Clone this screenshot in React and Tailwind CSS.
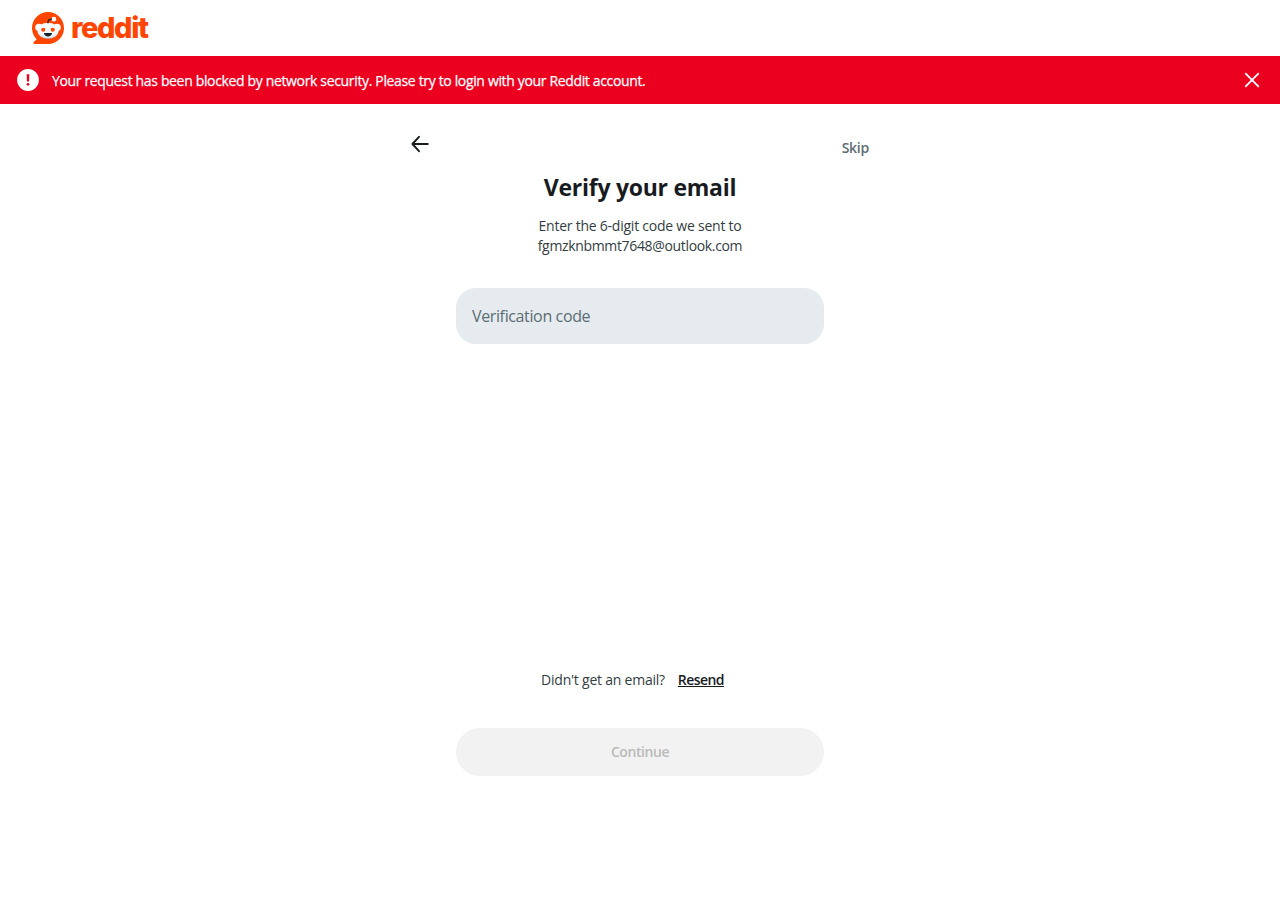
function RedditMark() {
  return (
    <svg viewBox="0 0 216 216" className="size-8 shrink-0" aria-hidden="true">
      <defs>
        <radialGradient id="head" cx="50%" cy="30%" r="75%">
          <stop offset="0" stopColor="#ffffff" />
          <stop offset="0.65" stopColor="#f4fafc" />
          <stop offset="0.85" stopColor="#d5e3ea" />
          <stop offset="1" stopColor="#8fa5af" />
        </radialGradient>
      </defs>
      <path
        fill="#ff4500"
        d="M108 0C48.35 0 0 48.35 0 108c0 29.82 12.09 56.82 31.63 76.37l-20.57 20.57c-4.08 4.08-1.19 11.06 4.58 11.06H108c59.65 0 108-48.35 108-108S167.65 0 108 0Z"
      />
      <circle cx="169.2" cy="105" r="25.2" fill="url(#head)" />
      <circle cx="46.8" cy="105" r="25.2" fill="url(#head)" />
      <ellipse cx="108" cy="126.5" rx="72" ry="54" fill="url(#head)" />
      <circle cx="76" cy="120" r="14" fill="#ff4500" />
      <circle cx="140" cy="120" r="14" fill="#ff4500" />
      <path
        fill="#15242b"
        d="M108 141c-9 0-17.5.5-25.5 1.4-1.6.2-2.5 1.7-1.9 3.1 4.5 12 15 20.5 27.4 20.5s22.9-8.500 27.4-20.500c.6-1.4-.3-2.9-1.9-3.1-8-.9-16.5-1.4-25.5-1.4Z"
      />
      <circle cx="147.5" cy="49.4" r="16.5" fill="url(#head)" />
      <path d="M107.8 73c0-14 10-25 24-25" fill="none" stroke="#15242b" strokeWidth="9.5" strokeLinecap="round" />
    </svg>
  );
}

function AlertIcon() {
  return (
    <svg viewBox="0 0 24 24" className="size-6 shrink-0" aria-hidden="true">
      <circle cx="12" cy="12" r="10.9" fill="#fff" />
      <path d="M10.7 6.2h2.6l-.25 7.4h-2.1z" fill="#eb001f" />
      <circle cx="12" cy="16.3" r="1.35" fill="#eb001f" />
    </svg>
  );
}

function CloseIcon() {
  return (
    <svg viewBox="0 0 16 16" className="size-4" fill="none" stroke="#fff" strokeWidth="1.8" strokeLinecap="round">
      <path d="m1.7 1.7 12.6 12.6M14.3 1.7 1.7 14.3" />
    </svg>
  );
}

function BackIcon() {
  return (
    <svg viewBox="0 0 20 20" className="size-5" fill="none" stroke="#181c1f" strokeWidth="1.9" strokeLinecap="round" strokeLinejoin="round">
      <path d="M9 2.8 2.4 10 9 17.2M2.6 10h15.2" />
    </svg>
  );
}

export default function App() {
  return (
    <div className="flex min-h-[900px] flex-col bg-white font-['Open_Sans',sans-serif] text-[#181c1f]">
      <header className="flex h-14 items-center gap-[7px] px-8">
        <RedditMark />
        <span className="font-['Inter',sans-serif] text-[29px] leading-8 font-extrabold tracking-[-1.4px] text-[#ff4500]">reddit</span>
      </header>

      <div role="alert" className="flex h-12 items-center bg-[#eb001f] pr-5 pl-4 text-white">
        <AlertIcon />
        <p className="ml-3 pt-0.5 text-sm leading-5 tracking-[-0.346px] whitespace-nowrap [-webkit-text-stroke:0.25px_white]">
          Your request has been blocked by network security. Please try to login with your Reddit account.
        </p>
        <button aria-label="Close" className="ml-auto">
          <CloseIcon />
        </button>
      </div>

      <main className="mx-auto flex w-[480px] flex-col">
        <div className="flex h-16 items-start justify-between pt-[30px] pr-[11px] pl-[10px]">
          <button aria-label="Back">
            <BackIcon />
          </button>
          <button className="mt-1 text-sm leading-5 font-semibold tracking-[-0.25px] text-[#5c6c74]">Skip</button>
        </div>

        <h1 className="mt-[3px] text-center text-[23px] leading-8 font-bold tracking-[-0.27px]">Verify your email</h1>
        <p className="mt-[13px] text-center text-sm leading-5 tracking-[-0.235px] text-[#333d42]">
          Enter the 6-digit code we sent to
          <br />
          <span className="tracking-[-0.34px]">fgmzknbmmt7648@outlook.com</span>
        </p>

        <div className="mx-auto mt-8 flex h-14 w-[368px] items-center rounded-[20px] bg-[#e5ebee] px-4">
          <span className="text-base leading-6 tracking-[-0.37px] text-[#5c6c74]">Verification code</span>
        </div>

        <p className="mt-[326px] mr-[15px] flex justify-center gap-[13px] text-sm leading-5 text-[#333d42]">
          <span className="tracking-[-0.23px]">Didn't get an email?</span>
          <a className="tracking-[-0.58px] font-semibold text-[#181c1f] underline">Resend</a>
        </p>

        <button className="mx-auto mt-[38px] h-12 w-[368px] rounded-full bg-[#f2f2f2] text-sm font-semibold tracking-[-0.42px] text-[#bababa]">
          Continue
        </button>
      </main>
    </div>
  );
}
